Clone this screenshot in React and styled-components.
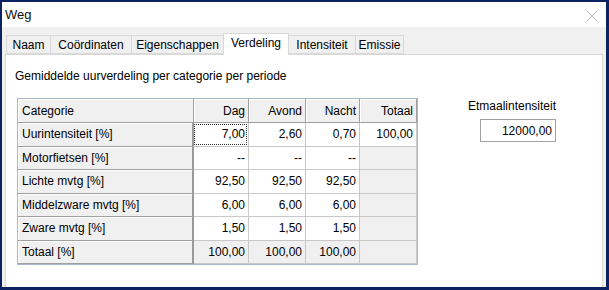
import React from 'react';
import styled, { createGlobalStyle, css } from 'styled-components';

const GlobalStyle = createGlobalStyle`
    html, body {
        margin: 0;
        padding: 0;
        background: #ffffff;
    }
    body {
        font-family: "Liberation Sans", Arial, sans-serif;
        font-size: 12px;
        color: #000000;
    }
`;

const Window = styled.div`
    width: 609px;
    height: 290px;
    box-sizing: border-box;
    border: solid #0d2260;
    border-width: 2px 3px 3px 2px;
    background: #f0f0f0;
    display: flex;
    flex-direction: column;
    overflow: hidden;
`;

const TitleBar = styled.div`
    height: 25px;
    flex: none;
    background: #ffffff;
    display: flex;
    align-items: center;
    justify-content: space-between;
    padding: 0 8px 0 3px;
    font-size: 13px;
    color: #101010;
`;

const CloseIcon = styled.svg`
    width: 12px;
    height: 12px;
    margin-top: 2px;
`;

const Body = styled.div`
    flex: 1;
    display: flex;
    flex-direction: column;
    padding: 5px 3px 0 3px;
    min-height: 0;
`;

const TabBar = styled.div`
    height: 22px;
    display: flex;
    align-items: flex-end;
    padding-left: 2px;
    position: relative;
    z-index: 1;
`;

const Tab = styled.div`
    box-sizing: border-box;
    height: ${p => (p.active ? '22px' : '19px')};
    width: ${p => p.w}px;
    margin-bottom: ${p => (p.active ? '-1px' : '0')};
    border: 1px solid #d9d9d9;
    border-bottom: ${p => (p.active ? 'none' : '1px solid #d9d9d9')};
    margin-left: -1px;
    background: ${p => (p.active ? '#ffffff' : '#f0f0f0')};
    display: flex;
    align-items: center;
    justify-content: center;
    padding-bottom: ${p => (p.active ? '3px' : '0')};
    white-space: nowrap;
`;

const Panel = styled.div`
    flex: 1;
    background: #ffffff;
    border: 1px solid #d9d9d9;
    border-bottom: none;
    padding: 14px 9px 0 9px;
`;

const Heading = styled.div`
    line-height: 14px;
    margin-bottom: 15px;
`;

const Content = styled.div`
    display: flex;
    align-items: flex-start;
`;

const Grid = styled.div`
    margin-left: 2px;
    display: grid;
    grid-template-columns: 176px 55px 57px 54px 57px;
    grid-template-rows: 24px repeat(6, 23.5px);
    border: 1px solid #a8b8c8;
`;

const raised = css`
    background: #f0f0f0;
    border-right: 1px solid #a0a0a0;
    border-bottom: 1px solid #a0a0a0;
    box-shadow: inset 1px 1px 0 #ffffff;
`;

const Cell = styled.div`
    box-sizing: border-box;
    display: flex;
    align-items: center;
    justify-content: ${p => (p.left ? 'flex-start' : 'flex-end')};
    padding: 0 3px 0 4px;
    white-space: nowrap;
    position: relative;
    ${p =>
        p.kind === 'head' || p.kind === 'label'
            ? raised
            : css`
                  background: ${p.kind === 'readonly' ? '#f0f0f0' : '#ffffff'};
                  border-right: 1px solid #c8c8c8;
                  border-bottom: 1px solid #c8c8c8;
              `}
    ${p =>
        p.kind === 'label' &&
        css`
            border-right: 2px solid #9a9a9a;
        `}
    ${p =>
        p.focused &&
        css`
            &::after {
                content: '';
                position: absolute;
                inset: 1px 1px 1px 0;
                border: 1px dotted #303030;
            }
        `}
`;

const Side = styled.div`
    margin-left: 50px;
    padding-top: 1px;
    display: flex;
    flex-direction: column;
`;

const SideLabel = styled.div`
    line-height: 14px;
    margin-bottom: 6px;
`;

const NumberBox = styled.div`
    box-sizing: border-box;
    margin-left: 12px;
    width: 76px;
    height: 23px;
    border: 1px solid #a0a0a0;
    background: #ffffff;
    display: flex;
    align-items: center;
    justify-content: flex-end;
    padding-right: 3px;
`;

const tabs = [
    { name: 'Naam', w: 45 },
    { name: 'Coördinaten', w: 82 },
    { name: 'Eigenschappen', w: 93 },
    { name: 'Verdeling', w: 66, active: true },
    { name: 'Intensiteit', w: 68 },
    { name: 'Emissie', w: 49 },
];

const rows = [
    { label: 'Uurintensiteit [%]', values: ['7,00', '2,60', '0,70'], total: '100,00', editable: true },
    { label: 'Motorfietsen [%]', values: ['--', '--', '--'] },
    { label: 'Lichte mvtg [%]', values: ['92,50', '92,50', '92,50'] },
    { label: 'Middelzware mvtg [%]', values: ['6,00', '6,00', '6,00'] },
    { label: 'Zware mvtg [%]', values: ['1,50', '1,50', '1,50'] },
    { label: 'Totaal [%]', values: ['100,00', '100,00', '100,00'], sum: true },
];

const App = () => (
    <>
        <GlobalStyle />
        <Window>
            <TitleBar>
                <span>Weg</span>
                <CloseIcon viewBox="0 0 12 12">
                    <path d="M0.5 0.5 L11.5 11.5 M11.5 0.5 L0.5 11.5" stroke="#b4b4b4" strokeWidth="1" fill="none" />
                </CloseIcon>
            </TitleBar>
            <Body>
                <TabBar>
                    {tabs.map(t => (
                        <Tab key={t.name} w={t.w} active={t.active}>
                            {t.name}
                        </Tab>
                    ))}
                </TabBar>
                <Panel>
                    <Heading>Gemiddelde uurverdeling per categorie per periode</Heading>
                    <Content>
                        <Grid>
                            <Cell kind="head" left>Categorie</Cell>
                            <Cell kind="head">Dag</Cell>
                            <Cell kind="head">Avond</Cell>
                            <Cell kind="head">Nacht</Cell>
                            <Cell kind="head">Totaal</Cell>
                            {rows.map(r => (
                                <React.Fragment key={r.label}>
                                    <Cell kind="label" left>{r.label}</Cell>
                                    {r.values.map((v, i) => (
                                        <Cell
                                            key={i}
                                            kind={r.sum ? 'readonly' : 'value'}
                                            focused={r.editable && i === 0}
                                        >
                                            {v}
                                        </Cell>
                                    ))}
                                    <Cell kind={r.total ? 'value' : 'readonly'}>{r.total || ''}</Cell>
                                </React.Fragment>
                            ))}
                        </Grid>
                        <Side>
                            <SideLabel>Etmaalintensiteit</SideLabel>
                            <NumberBox>12000,00</NumberBox>
                        </Side>
                    </Content>
                </Panel>
            </Body>
        </Window>
    </>
);

export default App;
